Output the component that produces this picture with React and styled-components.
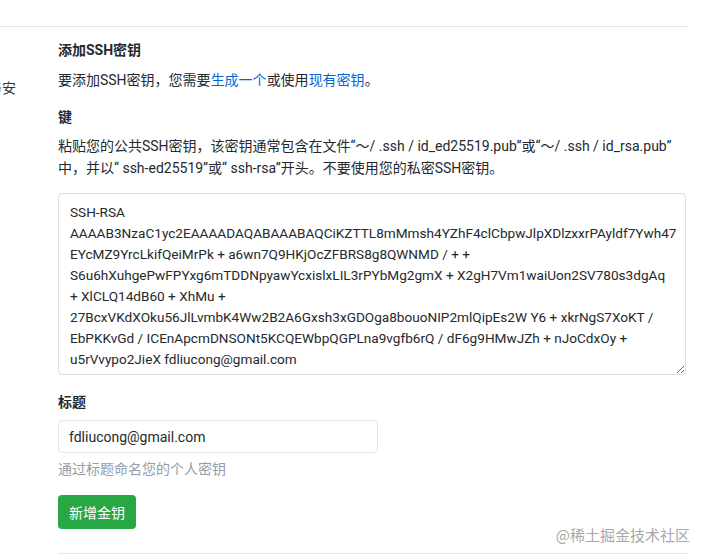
import React from "react";
import styled, { createGlobalStyle } from "styled-components";

const GlobalStyle = createGlobalStyle`
  body {
    margin: 0;
    background: #fff;
    font-family: Roboto, "Noto Sans CJK SC", sans-serif;
    color: #24292e;
  }
`;

const Page = styled.div`
  position: relative;
  width: 704px;
  height: 560px;
  overflow: hidden;
  padding-top: 26px;
  box-sizing: border-box;
`;

const Layout = styled.div`
  width: 688px;
  display: flex;
  gap: 42px;
  border-top: 1px solid #e6e6e6;
`;

const Sidebar = styled.div`
  width: 16px;
  padding-top: 51px;
  display: flex;
  justify-content: flex-end;
  overflow: hidden;
  white-space: nowrap;
  font-size: 14px;
  line-height: 20px;
  color: #333;
`;

const Main = styled.div`
  width: 630px;
  padding-top: 13px;
  display: flex;
  flex-direction: column;
`;

const Heading = styled.div`
  font-size: 14px;
  font-weight: 700;
  line-height: 20px;
  margin-top: ${(p) => p.$mt || 0}px;
`;

const Text = styled.p`
  margin: ${(p) => p.$mt || 0}px 0 0;
  font-size: 14px;
  line-height: ${(p) => p.$lh || 20}px;
  color: ${(p) => (p.$muted ? "#959da5" : "#24292e")};
`;

const Link = styled.a`
  color: #0366d6;
  text-decoration: none;
`;

const KeyArea = styled.textarea`
  margin-top: 14px;
  width: 628px;
  height: 182px;
  box-sizing: border-box;
  padding: 8px 11px 6px;
  border: 1px solid #dcdfe3;
  border-radius: 4px;
  font-family: Roboto, "Noto Sans CJK SC", sans-serif;
  font-size: 13.6px;
  line-height: 21px;
  color: #24292e;
  overflow: hidden;
  white-space: pre;
  outline: none;
`;

const TitleInput = styled.input`
  margin-top: 8px;
  width: 320px;
  height: 33px;
  box-sizing: border-box;
  padding: 0 10px;
  border: 1px solid #e1e4e8;
  border-radius: 4px;
  font-family: Roboto, "Noto Sans CJK SC", sans-serif;
  font-size: 14px;
  color: #24292e;
  outline: none;
`;

const SubmitButton = styled.button`
  margin-top: 16px;
  align-self: flex-start;
  height: 34px;
  padding: 0 11px;
  border: none;
  border-radius: 4px;
  background: #28a745;
  color: #fff;
  font-family: Roboto, "Noto Sans CJK SC", sans-serif;
  font-size: 14px;
  cursor: pointer;
`;

const Divider = styled.div`
  margin-top: 24px;
  border-top: 1px solid #e6e6e6;
`;

const Watermark = styled.div`
  position: absolute;
  right: 14px;
  bottom: 15px;
  font-family: "Noto Sans CJK SC", sans-serif;
  font-size: 15px;
  color: #a8a8a8;
  text-shadow: 0 0 1px #fff;
`;

const keyValue = [
  "SSH-RSA",
  "AAAAB3NzaC1yc2EAAAADAQABAAABAQCiKZTTL8mMmsh4YZhF4clCbpwJlpXDlzxxrPAyldf7Ywh47",
  "EYcMZ9YrcLkifQeiMrPk + a6wn7Q9HKjOcZFBRS8g8QWNMD / + +",
  "S6u6hXuhgePwFPYxg6mTDDNpyawYcxislxLIL3rPYbMg2gmX + X2gH7Vm1waiUon2SV780s3dgAq",
  "+ XlCLQ14dB60 + XhMu +",
  "27BcxVKdXOku56JlLvmbK4Ww2B2A6Gxsh3xGDOga8bouoNIP2mlQipEs2W Y6 + xkrNgS7XoKT /",
  "EbPKKvGd / ICEnApcmDNSONt5KCQEWbpQGPLna9vgfb6rQ / dF6g9HMwJZh + nJoCdxOy +",
  "u5rVvypo2JieX fdliucong@gmail.com",
].join("\n");

const App = () => {
  return (
    <Page>
      <GlobalStyle />
      <Layout>
        <Sidebar>
          <span>安全设置与安</span>
        </Sidebar>
        <Main>
          <Heading>添加SSH密钥</Heading>
          <Text $mt={10}>
            要添加SSH密钥，您需要<Link href="#">生成一个</Link>或使用
            <Link href="#">现有密钥</Link>。
          </Text>
          <Heading $mt={17}>键</Heading>
          <Text $mt={8} $lh={22}>
            粘贴您的公共SSH密钥，该密钥通常包含在文件“〜/ .ssh / id_ed25519.pub”或“〜/ .ssh / id_rsa.pub”
            中，并以“ ssh-ed25519”或“ ssh-rsa”开头。不要使用您的私密SSH密钥。
          </Text>
          <KeyArea wrap="off" defaultValue={keyValue} spellCheck={false} />
          <Heading $mt={17}>标题</Heading>
          <TitleInput defaultValue="fdliucong@gmail.com" />
          <Text $mt={6} $muted>
            通过标题命名您的个人密钥
          </Text>
          <SubmitButton>新增金钥</SubmitButton>
          <Divider />
        </Main>
      </Layout>
      <Watermark>@稀土掘金技术社区</Watermark>
    </Page>
  );
};

export default App;
